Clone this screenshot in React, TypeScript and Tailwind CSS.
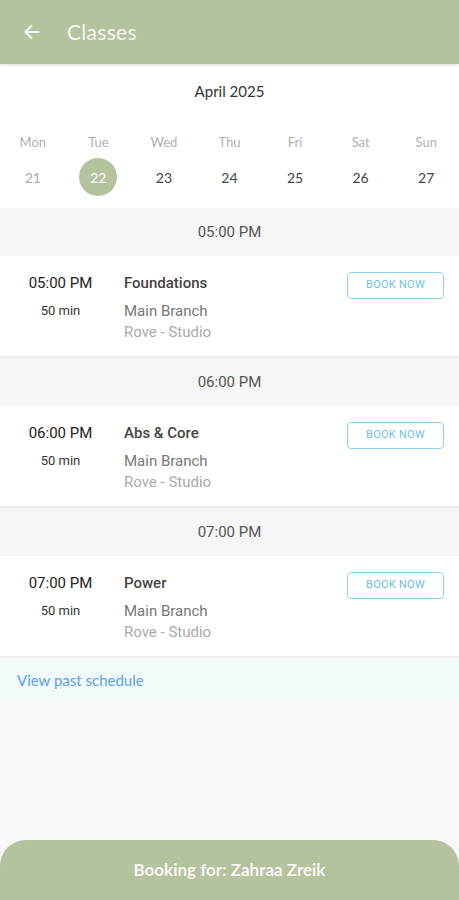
const days = [
  { name: "Mon", date: "21" },
  { name: "Tue", date: "22", selected: true },
  { name: "Wed", date: "23" },
  { name: "Thu", date: "24" },
  { name: "Fri", date: "25" },
  { name: "Sat", date: "26" },
  { name: "Sun", date: "27" },
];

const classes = [
  { time: "05:00 PM", name: "Foundations" },
  { time: "06:00 PM", name: "Abs & Core" },
  { time: "07:00 PM", name: "Power" },
];

function ClassRow({ time, name }: { time: string; name: string }) {
  return (
    <div>
      <div className="h-[48px] bg-[#f6f6f6] flex items-center justify-center text-[15px] text-[#555] font-['Roboto',sans-serif]">
        {time}
      </div>
      <div className="h-[102px] bg-white flex border-b-2 border-[#ececec] font-['Roboto',sans-serif]">
        <div className="w-[124px] flex flex-col items-center pt-[17px] pr-[3px]">
          <span className="text-[15px] text-[#222] leading-[20px]">{time}</span>
          <span className="text-[13px] text-[#333] mt-[10px] leading-[16px]">50 min</span>
        </div>
        <div className="flex-1 flex flex-col pt-[17px]">
          <span className="text-[15px] text-[#444] font-medium leading-[20px]">{name}</span>
          <span className="text-[15px] text-[#777] mt-[8px] leading-[20px]">Main Branch</span>
          <span className="text-[15px] text-[#aaa] mt-[1px] leading-[20px]">Rove - Studio</span>
        </div>
        <div className="pt-[15px] pr-[15px]">
          <button className="w-[97px] h-[27px] border border-[#8fd3e8] rounded-[4px] text-[11px] text-[#6cc3dd] tracking-wide">
            BOOK NOW
          </button>
        </div>
      </div>
    </div>
  );
}

export default function App() {
  return (
    <div className="w-[459px] h-[900px] bg-[#f7f8f8] flex flex-col font-['Lato',sans-serif] relative overflow-hidden">
      <div className="h-[64px] bg-[#b4c29e] flex items-center shadow-[0_1px_3px_rgba(0,0,0,0.15)] z-10">
        <svg width="20" height="20" viewBox="0 0 24 24" className="ml-[22px]" fill="none" stroke="#f3f6ee" strokeWidth="2.6" strokeLinecap="round" strokeLinejoin="round">
          <path d="M20 12H4M11 5l-7 7 7 7" />
        </svg>
        <span className="ml-[25px] text-[21px] text-[#f3f6ee] tracking-[0.3px]">Classes</span>
      </div>

      <div className="bg-white h-[144px] flex flex-col">
        <div className="text-center text-[15px] text-[#333] mt-[17px] leading-[20px]">April 2025</div>
        <div className="grid grid-cols-7 mt-[33px]">
          {days.map((d) => (
            <div key={d.name} className="flex flex-col items-center">
              <span className="text-[13px] text-[#b0b0b0] leading-[16px]">{d.name}</span>
              <div
                className={
                  d.selected
                    ? "mt-[8px] w-[38px] h-[38px] rounded-full bg-[#b4c29e] flex items-center justify-center text-[14px] text-white"
                    : "mt-[8px] w-[38px] h-[38px] flex items-center justify-center text-[14px] " +
                      (d.name === "Mon" ? "text-[#aaa]" : "text-[#444]")
                }
              >
                {d.date}
              </div>
            </div>
          ))}
        </div>
      </div>

      {classes.map((c) => (
        <ClassRow key={c.time} time={c.time} name={c.name} />
      ))}

      <div className="bg-[#f3fafa] h-[44px] flex items-center pl-[17px]">
        <span className="text-[15px] text-[#5b9ff0]">View past schedule</span>
      </div>

      <div className="flex-1" />

      <div className="h-[60px] bg-[#b4c29e] rounded-t-[26px] flex items-center justify-center">
        <span className="text-[17px] font-bold text-[#f7f8f2] font-['Lato',sans-serif]">Booking for: Zahraa Zreik</span>
      </div>
    </div>
  );
}
